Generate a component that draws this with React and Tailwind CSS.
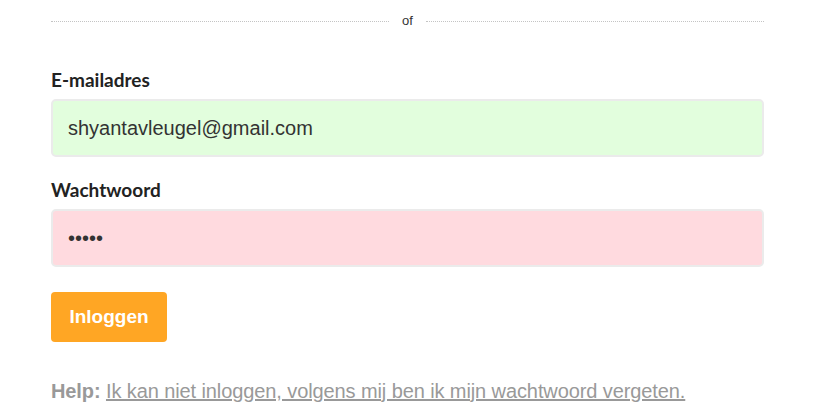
export default function App() {
  return (
    <div className="min-h-[410px] bg-white font-['Liberation_Sans',Arial,sans-serif]">
      <div className="ml-[51px] w-[713px] pt-[12px]">
        <div className="flex h-[18px] items-center">
          <div className="flex-1 border-t border-dotted border-[#c4c4c4]" />
          <span className="px-[13px] text-[13px] text-[#333]">of</span>
          <div className="flex-1 border-t border-dotted border-[#c4c4c4]" />
        </div>

        <form className="mt-[38px]" onSubmit={(e) => e.preventDefault()}>
          <label className="block font-['Lato',sans-serif] text-[19px] leading-[24px] font-bold text-[#222]">
            E-mailadres
          </label>
          <input
            className="mt-[7px] block h-[58px] w-full rounded-[5px] border-2 border-[#ebebeb] bg-[#e2fedd] px-[15px] text-[20px] text-[#333] outline-none"
            defaultValue="shyantavleugel@gmail.com"
          />

          <label className="mt-[21px] block font-['Lato',sans-serif] text-[19px] leading-[24px] font-bold text-[#222]">
            Wachtwoord
          </label>
          <input
            type="password"
            className="mt-[7px] block h-[58px] w-full rounded-[5px] border-2 border-[#ebebeb] bg-[#ffdadf] px-[15px] text-[20px] text-[#333] outline-none"
            defaultValue="abcde"
          />

          <button
            type="submit"
            className="mt-[25px] h-[50px] w-[116px] rounded-[4px] bg-[#ffa624] text-[19px] font-bold text-white"
          >
            Inloggen
          </button>
        </form>

        <p className="mt-[34px] text-[20px] tracking-[-0.1px] text-[#999]">
          <span className="font-bold">Help:</span>{' '}
          <a href="#" className="underline">
            Ik kan niet inloggen, volgens mij ben ik mijn wachtwoord vergeten.
          </a>
        </p>
      </div>
    </div>
  );
}
